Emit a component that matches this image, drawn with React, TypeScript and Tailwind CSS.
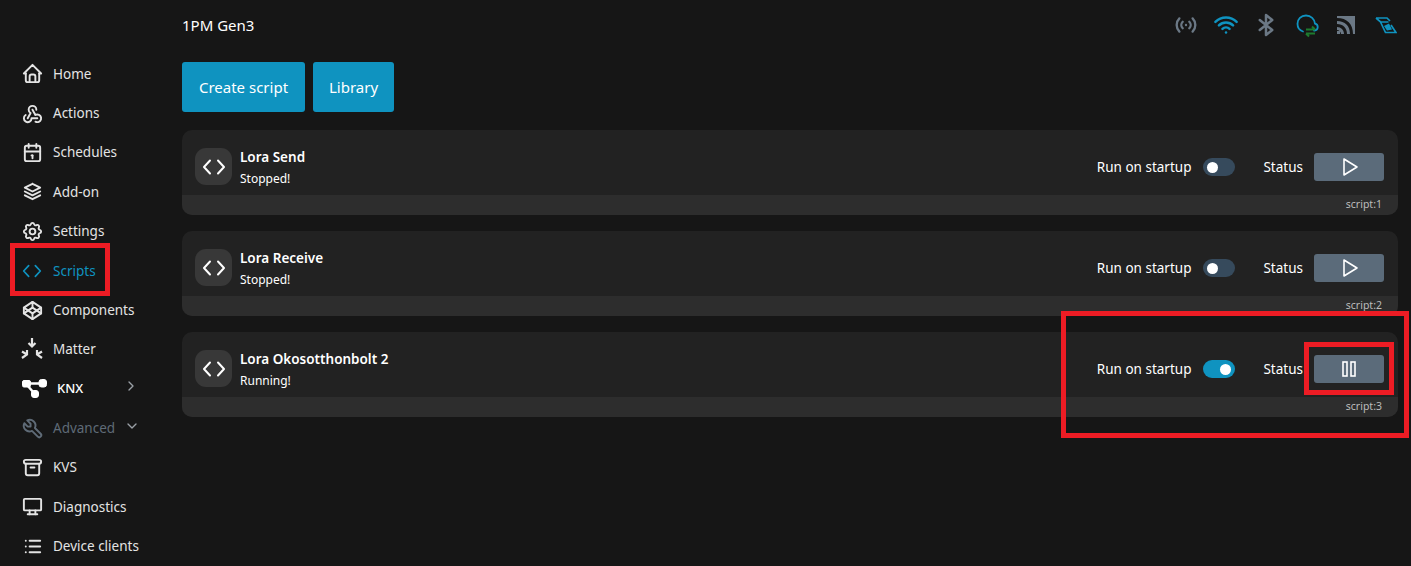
import {
  TbAccessPoint,
  TbArchive,
  TbBluetooth,
  TbBrandCodepen,
  TbCalendar,
  TbChevronDown,
  TbChevronRight,
  TbDeviceDesktop,
  TbHome,
  TbList,
  TbPlayerPlay,
  TbSettings,
  TbStack2,
  TbTool,
  TbWebhook,
  TbWifi,
} from "react-icons/tb";

const CodeIcon = ({ size = 24 }: { size?: number }) => (
  <svg width={size} height={size} viewBox="0 0 24 24" fill="none" stroke="currentColor" strokeWidth="2" strokeLinecap="round" strokeLinejoin="round">
    <path d="M8 5.500 2 12l6 6.500" />
    <path d="M16 5.500l6 6.500-6 6.500" />
  </svg>
);

const PauseIcon = () => (
  <svg width="14" height="16" viewBox="0 0 14 16" fill="none" stroke="currentColor" strokeWidth="1.600">
    <rect x="1" y="1" width="4" height="14" />
    <rect x="9" y="1" width="4" height="14" />
  </svg>
);

const MatterIcon = () => (
  <svg width="22" height="22" viewBox="0 0 22 22" fill="none" stroke="currentColor" strokeWidth="2.200">
    <path d="M11 0v8M7.500 5l3.500 3.500L14.500 5" />
    <path d="M1 20l5-3.500V12M1 13.500l5 3" />
    <path d="M21 20l-5-3.500V12M21 13.500l-5 3" />
  </svg>
);

const KnxIcon = () => (
  <svg width="25" height="19" viewBox="0 0 25 19" fill="white" stroke="white">
    <rect x="0.500" y="1.500" width="8" height="6.500" rx="1.500" />
    <rect x="17" y="0.500" width="7.500" height="7.500" rx="2.500" />
    <rect x="9.500" y="11.500" width="7" height="7" rx="2.500" />
    <path d="M7 4.500h11M5 6l7 8" strokeWidth="2.500" fill="none" />
  </svg>
);

const navItems = [
  { label: "Home", icon: <TbHome size={23} /> },
  { label: "Actions", icon: <TbWebhook size={23} /> },
  { label: "Schedules", icon: <TbCalendar size={23} /> },
  { label: "Add-on", icon: <TbStack2 size={23} /> },
  { label: "Settings", icon: <TbSettings size={23} /> },
  { label: "Scripts", icon: <CodeIcon size={20} />, active: true },
  { label: "Components", icon: <TbBrandCodepen size={23} /> },
  { label: "Matter", icon: <MatterIcon /> },
];

const navBottom = [
  { label: "KVS", icon: <TbArchive size={23} /> },
  { label: "Diagnostics", icon: <TbDeviceDesktop size={23} /> },
  { label: "Device clients", icon: <TbList size={23} /> },
];

const scripts = [
  { id: 1, name: "Lora Send", status: "Stopped!", running: false },
  { id: 2, name: "Lora Receive", status: "Stopped!", running: false },
  { id: 3, name: "Lora Okosotthonbolt 2", status: "Running!", running: true },
];

const NavRow = ({ label, icon, active }: { label: string; icon: React.ReactNode; active?: boolean }) => (
  <div className={`h-[39.4px] flex items-center gap-[9px] pl-[20px] ${active ? "text-[#0f93c0]" : "text-[#e4e4e4]"}`}>
    <span className="w-[24px] flex justify-center">{icon}</span>
    <span>{label}</span>
  </div>
);

const ScriptCard = ({ script }: { script: (typeof scripts)[number] }) => (
  <div className="rounded-[10px] overflow-hidden bg-[#222222]">
    <div className="h-[65px] pt-[9px] flex items-center pl-[13px] pr-[14px]">
      <div className="w-[37px] h-[37px] -mt-[1px] rounded-[11px] bg-[#383838] flex items-center justify-center text-white">
        <CodeIcon size={24} />
      </div>
      <div className="ml-[8px] mt-[1px] text-white">
        <div className="text-[13.5px] font-semibold leading-[21px]">{script.name}</div>
        <div className="text-[12px] leading-[21px]">{script.status}</div>
      </div>
      <div className="ml-auto flex items-center text-white text-[13.5px]">
        <span>Run on startup</span>
        <div
          className={`ml-[12px] w-[32px] h-[18px] rounded-full flex items-center px-[4px] ${
            script.running ? "bg-[#0f93c0] justify-end" : "bg-[#364a5c] justify-start"
          }`}
        >
          <div className="w-[11px] h-[11px] rounded-full bg-white" />
        </div>
        <span className="ml-[28px]">Status</span>
        <div className="ml-[11px] w-[70px] h-[28px] rounded-[3px] bg-[#5b6b7a] flex items-center justify-center text-white">
          {script.running ? <PauseIcon /> : <TbPlayerPlay size={24} strokeWidth={1.6} />}
        </div>
      </div>
    </div>
    <div className="h-[20px] bg-[#2d2d2d] flex items-center justify-end pr-[16px] text-[10.5px] text-[#bcbcbc]">
      script:{script.id}
    </div>
  </div>
);

export default function App() {
  return (
    <div className="relative w-[1411px] h-[566px] overflow-hidden flex bg-[#161616] text-[13.5px] font-['Noto_Sans',sans-serif]">
      <aside className="w-[182px] shrink-0 pt-[54px]">
        {navItems.map((item) => (
          <NavRow key={item.label} {...item} />
        ))}
        <div className="h-[39.4px] flex items-center pl-[22px] text-white text-[13px] font-medium">
          <span className="w-[26px]">
            <KnxIcon />
          </span>
          <span className="ml-[9px] -mt-[1px]">KNX</span>
          <TbChevronRight size={16} className="ml-[40px] -mt-[6px] text-[#9aa0a6]" />
        </div>
        <div className="h-[39.4px] flex items-center gap-[9px] pl-[20px] text-[#5f6b77]">
          <span className="w-[24px] flex justify-center">
            <TbTool size={23} />
          </span>
          <span>Advanced</span>
          <TbChevronDown size={16} className="-mt-[4px] text-[#9aa0a6]" />
        </div>
        {navBottom.map((item) => (
          <NavRow key={item.label} {...item} />
        ))}
      </aside>

      <main className="flex-1">
        <header className="h-[50px] flex items-center justify-between pr-[5px] text-white text-[15px]">
          <span>1PM Gen3</span>
          <div className="flex items-center">
            <span className="w-[40px] flex justify-center">
              <TbAccessPoint size={28} className="text-[#6b7885]" />
            </span>
            <span className="w-[40px] flex justify-center">
              <TbWifi size={30} className="text-[#0f93c0]" />
            </span>
            <span className="w-[40px] flex justify-center">
              <TbBluetooth size={30} className="text-[#6b7885]" />
            </span>
            <span className="w-[40px] flex justify-center">
              <svg width="26" height="26" viewBox="0 0 26 26" fill="none">
                <path
                  d="M21 18.500h.5a3.500 3.500 0 0 0 .5-6.900C21.500 7 18 3.500 13 3.500c-5 0-8.500 3.700-8.500 8.300 0 3.800 2.200 6.700 5.500 7.700"
                  stroke="#0f93c0"
                  strokeWidth="1.800"
                  strokeLinecap="round"
                />
                <path d="M13 17.500h9M19 14.500l3 3M22 21.500h-9M16 24.500l-3-3" stroke="#1d7a2e" strokeWidth="2" />
              </svg>
            </span>
            <span className="w-[40px] flex justify-center">
              <svg width="20" height="20" viewBox="0 0 20 20" fill="#6b7885">
                <path d="M1 1h18v18h-2C17 9 11 3 1 3zM1 6c8 0 13 5 13 13h-3c0-6-4-10-10-10zM1 12c4 0 7 3 7 7H5c0-2-2-4-4-4zM1 16h3v3H1z" />
              </svg>
            </span>
            <span className="w-[40px] flex justify-center">
              <svg width="22" height="17" viewBox="0 0 22 17" fill="none" stroke="#0f93c0" strokeWidth="1.700">
                <path d="M1 1h11l3 3M1 1l4.500 4h8M5.500 5l5 10.500H21L16 8" />
                <path d="M9 9l5-2.500 3 6-5 1z" fill="#0f93c0" stroke="none" />
              </svg>
            </span>
          </div>
        </header>

        <div className="mt-[12px] flex gap-[8px] text-white text-[15px]">
          <button className="w-[123px] h-[50px] rounded-[3px] bg-[#0f93c0]">Create script</button>
          <button className="w-[81px] h-[50px] rounded-[3px] bg-[#0f93c0]">Library</button>
        </div>

        <div className="mt-[18px] mr-[13px] flex flex-col gap-[16px]">
          {scripts.map((script) => (
            <ScriptCard key={script.id} script={script} />
          ))}
        </div>
      </main>

      {/* red annotation boxes */}
      <div className="absolute left-[10px] top-[243px] w-[100px] h-[53px] border-[5px] border-[#ed1c24]" />
      <div className="absolute left-[1061px] top-[311px] w-[348px] h-[127px] border-[5px] border-[#ed1c24]" />
      <div className="absolute left-[1304px] top-[342px] w-[90px] h-[53px] border-[5px] border-[#ed1c24]" />
    </div>
  );
}
